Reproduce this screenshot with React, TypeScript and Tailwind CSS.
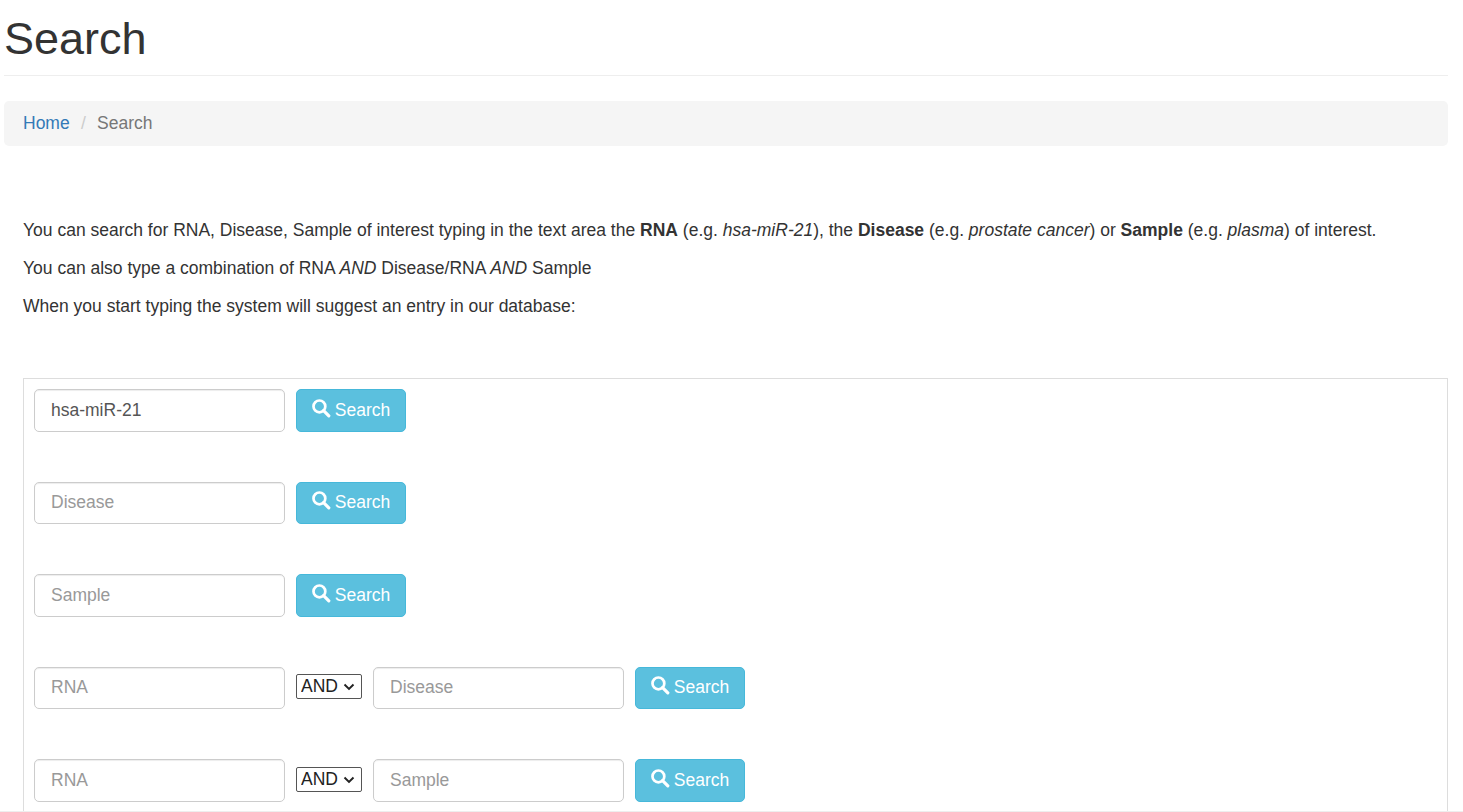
import React from "react";

function SearchIcon() {
  return (
    <svg width="19" height="19" viewBox="0 0 19 19" className="mb-[4px] shrink-0" aria-hidden="true">
      <circle cx="7.4" cy="7.4" r="5.9" fill="none" stroke="#fff" strokeWidth="2.7" />
      <path d="M11.6 11.6 L16.8 16.8" stroke="#fff" strokeWidth="3.2" strokeLinecap="round" />
    </svg>
  );
}

function TextInput({ placeholder, value }: { placeholder: string; value?: string }) {
  return (
    <input
      readOnly
      placeholder={placeholder}
      value={value}
      className="h-[42.5px] w-[251px] shrink-0 rounded-[5px] border border-[#ccc] bg-white px-4 text-[17.5px] text-[#555] placeholder:text-[#999] shadow-[inset_0_1px_1px_rgba(0,0,0,0.075)] outline-none"
    />
  );
}

function SearchButton() {
  return (
    <button className="flex h-[42.5px] w-[110px] shrink-0 items-center justify-center gap-[4px] rounded-[5px] border border-[#46b8da] bg-[#5bc0de] text-[17.5px] text-white">
      <SearchIcon />
      <span>Search</span>
    </button>
  );
}

function AndSelect() {
  return (
    <div className="relative mb-[2px] h-[25px] w-[66px] shrink-0">
      <select className="block h-full w-full appearance-none rounded-[2px] border border-[#555] bg-white pl-[4px] text-[17.5px] leading-[23px] text-[#222]">
        <option>AND</option>
      </select>
      <svg width="12" height="8" viewBox="0 0 12 8" className="pointer-events-none absolute right-[7px] top-[9px]" aria-hidden="true">
        <path d="M1.5 1.5 L6 6 L10.5 1.5" fill="none" stroke="#222" strokeWidth="1.9" />
      </svg>
    </div>
  );
}

function Row({ children }: { children: React.ReactNode }) {
  return <div className="flex h-[42.5px] items-center gap-[11px]">{children}</div>;
}

export default function App() {
  return (
    <div className="h-[812px] overflow-hidden border-b border-[#eee] bg-white pl-1 pr-[15px] font-['Liberation_Sans',Arial,sans-serif] text-[17.5px] leading-[25px] text-[#333]">
      <div className="h-[76px] border-b border-[#eee]">
        <h1 className="pt-[14px] text-[45px] font-normal leading-[50px]">Search</h1>
      </div>
      <nav className="mt-[25px] flex h-[45px] items-center gap-[11.25px] rounded-[5px] bg-[#f5f5f5] px-[19px]">
        <a className="text-[#337ab7]">Home</a>
        <span className="text-[#ccc]">/</span>
        <span className="text-[#777]">Search</span>
      </nav>
      <div className="mt-[72px] flex flex-col gap-[13px] pl-[19px]">
        <p>
          You can search for RNA, Disease, Sample of interest typing in the text area the <b>RNA</b> (e.g.{" "}
          <i>hsa-miR-21</i>), the <b>Disease</b> (e.g. <i>prostate cancer</i>) or <b>Sample</b> (e.g. <i>plasma</i>) of interest.
        </p>
        <p>
          You can also type a combination of RNA <i>AND</i> Disease/RNA <i>AND</i> Sample
        </p>
        <p>When you start typing the system will suggest an entry in our database:</p>
      </div>
      <div className="ml-[19px] mt-[59px] flex h-[600px] flex-col gap-[50px] border border-[#ddd] px-[10px] pt-[10px]">
        <Row>
          <TextInput placeholder="RNA" value="hsa-miR-21" />
          <SearchButton />
        </Row>
        <Row>
          <TextInput placeholder="Disease" />
          <SearchButton />
        </Row>
        <Row>
          <TextInput placeholder="Sample" />
          <SearchButton />
        </Row>
        <Row>
          <TextInput placeholder="RNA" />
          <AndSelect />
          <TextInput placeholder="Disease" />
          <SearchButton />
        </Row>
        <Row>
          <TextInput placeholder="RNA" />
          <AndSelect />
          <TextInput placeholder="Sample" />
          <SearchButton />
        </Row>
      </div>
    </div>
  );
}
